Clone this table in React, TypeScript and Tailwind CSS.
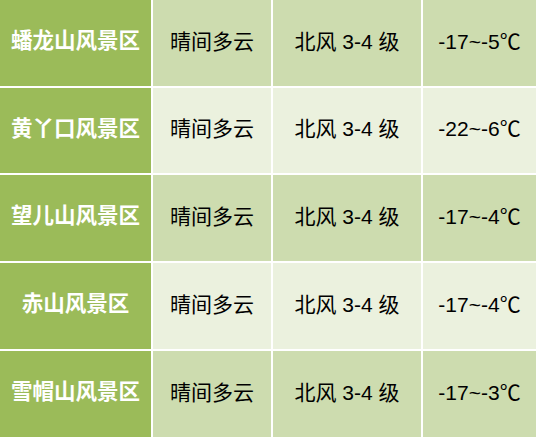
const rows = [
  { name: "蟠龙山风景区", weather: "晴间多云", wind: "北风 3-4 级", temp: "-17~-5℃" },
  { name: "黄丫口风景区", weather: "晴间多云", wind: "北风 3-4 级", temp: "-22~-6℃" },
  { name: "望儿山风景区", weather: "晴间多云", wind: "北风 3-4 级", temp: "-17~-4℃" },
  { name: "赤山风景区", weather: "晴间多云", wind: "北风 3-4 级", temp: "-17~-4℃" },
  { name: "雪帽山风景区", weather: "晴间多云", wind: "北风 3-4 级", temp: "-17~-3℃" },
];

export default function App() {
  return (
    <div
      className="grid w-[536px] h-[437px] grid-cols-[151px_118px_148px_1fr] grid-rows-[86px_85px_86px_86px_86px] gap-[2px] bg-white"
      style={{ fontFamily: '"Liberation Sans", "Noto Sans CJK SC", sans-serif' }}
    >
      {rows.map((r, i) => {
        const cell = i % 2 === 0 ? "bg-[#cddcaf]" : "bg-[#ebf1de]";
        return (
          <div key={r.name} className="contents">
            <div className="flex items-center justify-center bg-[#9bbb59] pb-[3px] text-[21.5px] font-bold text-white">
              {r.name}
            </div>
            <div className={`flex items-center justify-center ${cell} pb-[3px] text-[21px] text-black`}>
              {r.weather}
            </div>
            <div className={`flex items-center justify-center ${cell} pb-[3px] text-[21px] text-black`}>
              {r.wind}
            </div>
            <div className={`flex items-center justify-center ${cell} pb-[3px] text-[21px] text-black`}>
              {r.temp}
            </div>
          </div>
        );
      })}
    </div>
  );
}
